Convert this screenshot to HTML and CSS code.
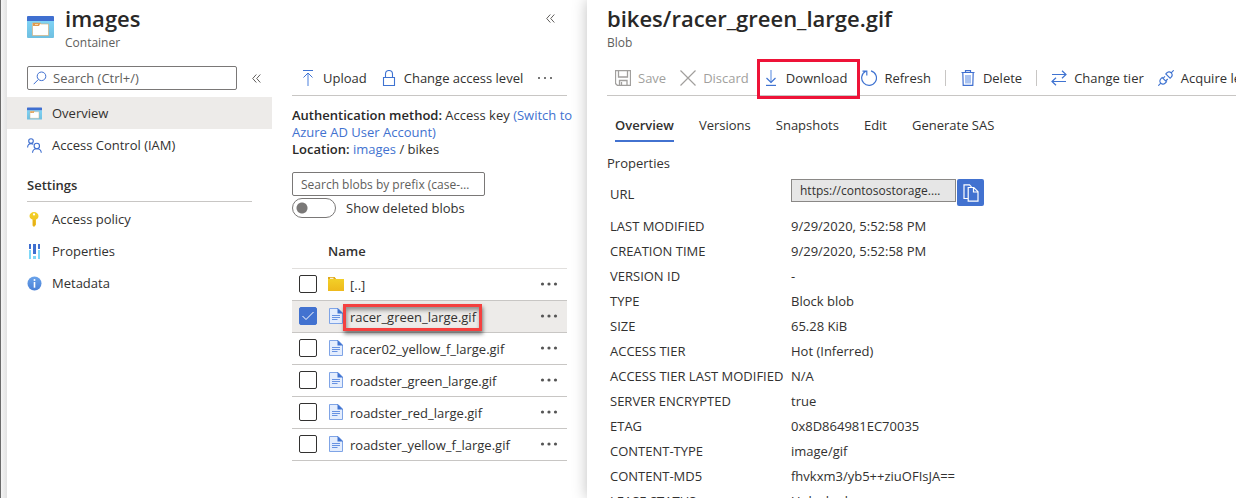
FILE: index.html
```html
<!DOCTYPE html>
<html lang="en">
<head>
<meta charset="utf-8">
<title>images - Container</title>
<link rel="stylesheet" href="styles.css">
</head>
<body>
<svg class="defs" aria-hidden="true">
  <defs>
    <linearGradient id="sky" x1="0" y1="0" x2="0" y2="1"><stop offset="0" stop-color="#7fd3f5"/><stop offset="1" stop-color="#6fbfe0"/></linearGradient>
    <linearGradient id="gold" x1="0" y1="0" x2="0" y2="1"><stop offset="0" stop-color="#f3d32a"/><stop offset="1" stop-color="#eeb91c"/></linearGradient>
    <linearGradient id="info" x1="0" y1="0" x2="0" y2="1"><stop offset="0" stop-color="#6aa3ea"/><stop offset="1" stop-color="#4a80d6"/></linearGradient>
    <symbol id="container" viewBox="0 0 27 22">
      <path d="M0 5h27v16a1 1 0 0 1-1 1H1a1 1 0 0 1-1-1z" fill="url(#sky)"/>
      <path d="M1 0h25a1 1 0 0 1 1 1v4H0V1a1 1 0 0 1 1-1z" fill="#3f6fd0"/>
      <path d="M5.500 7h8v1h8v11.500h-16z" fill="#fff" stroke="#dba96a" stroke-width=".6"/>
      <path d="M6 7h7.500L12 10H6z" fill="#e09a4e"/>
      <path d="M8 8.500h3" stroke="#f7d9a8"/>
    </symbol>
    <symbol id="file" viewBox="0 0 14 16">
      <path d="M.5.5h8.500l4.500 4.500v10.500H.5z" fill="#e4edfd" stroke="#7fa4e6"/>
      <path d="M8.500 0 14 5.500H8.500z" fill="#3f73d1"/>
      <path d="M3 7.500h8M3 9.500h8M3 11.500h5.500" stroke="#6792e2"/>
    </symbol>
    <symbol id="dots" viewBox="0 0 18 4">
      <circle cx="2.500" cy="2" r="1.600"/><circle cx="9" cy="2" r="1.600"/><circle cx="15.500" cy="2" r="1.600"/>
    </symbol>
    <symbol id="collapse" viewBox="0 0 9 9">
      <path d="M4.300.5.700 4.500l3.600 4M8.300.5 4.700 4.500l3.600 4" fill="none" stroke="#605e5c"/>
    </symbol>
  </defs>
</svg>
<div class="portal">
  <section class="blade container-blade">
    <header class="blade-head">
      <svg class="blade-icon"><use href="#container"/></svg>
      <div>
        <h1>images</h1>
        <p class="kind">Container</p>
      </div>
      <button class="plain collapse" aria-label="Collapse blade"><svg class="i9"><use href="#collapse"/></svg></button>
    </header>
    <div class="blade-body">
      <nav class="side">
        <div class="side-search">
          <label class="search-box">
            <svg class="i14" viewBox="0 0 14 14" fill="none" stroke="#3f6fd0"><circle cx="8.500" cy="5.300" r="4.300"/><path d="M5.300 8.500.700 13.200"/></svg>
            <input type="text" placeholder="Search (Ctrl+/)" aria-label="Search menu">
          </label>
          <button class="plain" aria-label="Collapse menu"><svg class="i9"><use href="#collapse"/></svg></button>
        </div>
        <a href="#" class="item active"><svg class="i15"><use href="#container"/></svg>Overview</a>
        <a href="#" class="item"><svg class="i15" viewBox="0 0 15 15" fill="none" stroke="#3f6fd0" stroke-width="1.100"><circle cx="4" cy="3" r="2.300"/><path d="M.6 9.500C.6 7 2 5.600 4 5.600q1.500 0 2.300.8"/><circle cx="9.800" cy="8" r="2.700"/><path d="M5.500 14.700c.2-2.600 1.800-4 4.300-4s4.300 1.400 4.500 4"/></svg>Access Control (IAM)</a>
        <h2>Settings</h2>
        <a href="#" class="item"><svg class="i15" viewBox="0 0 15 15"><path d="M7 0a4.500 4 0 0 1 4.500 4c0 1.800-1 3-2.500 3.600v5.200L7 15l-1.500-1.500V7.600C3.800 7 2.500 5.800 2.500 4A4.500 4 0 0 1 7 0z" fill="url(#gold)"/><circle cx="7" cy="2.400" r="1.100" fill="#fff"/><path d="M7 8v5.500" stroke="#d59a12" stroke-width=".8"/></svg>Access policy</a>
        <a href="#" class="item"><svg class="i15" viewBox="0 0 15 15"><path d="M2 0h2v5H2zM6 0h3v10H6zM11 0h2v5h-2z" fill="#3f6fd0"/><path d="M2 6h2v9H2zM6 12h3v3H6zM11 6h2v9h-2z" fill="#7fd8f8"/></svg>Properties</a>
        <a href="#" class="item"><svg class="i15" viewBox="0 0 15 15"><circle cx="7.500" cy="7.500" r="7" fill="url(#info)"/><circle cx="7.500" cy="3.900" r="1" fill="#fff"/><path d="M7.500 6v5.700" stroke="#fff" stroke-width="1.600"/></svg>Metadata</a>
      </nav>
      <main class="list">
        <div class="toolbar">
          <button class="tool"><svg class="i16" viewBox="0 0 16 16" fill="none" stroke="#3f73d1"><path d="M3 .5h10"/><path d="M8 16V3" stroke="#8fb0ea" stroke-width="1.600"/><path d="M3.500 7.500 8 3l4.500 4.500"/></svg>Upload</button>
          <button class="tool"><svg class="i16" viewBox="0 0 16 16" fill="none" stroke="#3f73d1" stroke-width="1.100"><path d="M2.500 7.500h11v8h-11zM4.500 7.500V4a3.500 3.500 0 0 1 7 0v3.500"/></svg>Change access level</button>
          <button class="plain" aria-label="More commands"><svg class="more" viewBox="0 0 16 4"><path d="M1 1h2v2H1zM7 1h2v2H7zM13 1h2v2h-2z"/></svg></button>
        </div>
        <div class="info">
          <p><b>Authentication method:</b> Access key <a href="#">(Switch to<br>Azure AD User Account)</a></p>
          <p><b>Location:</b> <a href="#">images</a> / bikes</p>
        </div>
        <input class="prefix" type="text" placeholder="Search blobs by prefix (case-sensitive)" aria-label="Search blobs by prefix">
        <label class="switch"><input type="checkbox" role="switch">Show deleted blobs</label>
        <table class="blobs">
          <thead><tr><td></td><th scope="col" colspan="3">Name</th></tr></thead>
          <tbody>
            <tr><td class="check"><input type="checkbox" aria-label="Select parent folder"></td><td class="type"><svg class="i16" viewBox="0 0 16 16"><path d="M0 1h6.500l1.500 2h8v12H0z" fill="url(#gold)"/><path d="M0 1h6.500l1.500 2H0z" fill="#dfa81c"/><path d="M2 2.300h3.500" stroke="#fff"/></svg></td><td class="name"><a href="#">[..]</a></td><td class="menu"><button class="plain" aria-label="More"><svg class="dots"><use href="#dots"/></svg></button></td></tr>
            <tr class="selected"><td class="check"><input type="checkbox" checked aria-label="Select racer_green_large.gif"></td><td class="type"><svg class="file"><use href="#file"/></svg></td><td class="name"><a href="#" class="marked">racer_green_large.gif</a></td><td class="menu"><button class="plain" aria-label="More"><svg class="dots"><use href="#dots"/></svg></button></td></tr>
            <tr><td class="check"><input type="checkbox" aria-label="Select racer02_yellow_f_large.gif"></td><td class="type"><svg class="file"><use href="#file"/></svg></td><td class="name"><a href="#">racer02_yellow_f_large.gif</a></td><td class="menu"><button class="plain" aria-label="More"><svg class="dots"><use href="#dots"/></svg></button></td></tr>
            <tr><td class="check"><input type="checkbox" aria-label="Select roadster_green_large.gif"></td><td class="type"><svg class="file"><use href="#file"/></svg></td><td class="name"><a href="#">roadster_green_large.gif</a></td><td class="menu"><button class="plain" aria-label="More"><svg class="dots"><use href="#dots"/></svg></button></td></tr>
            <tr><td class="check"><input type="checkbox" aria-label="Select roadster_red_large.gif"></td><td class="type"><svg class="file"><use href="#file"/></svg></td><td class="name"><a href="#">roadster_red_large.gif</a></td><td class="menu"><button class="plain" aria-label="More"><svg class="dots"><use href="#dots"/></svg></button></td></tr>
            <tr><td class="check"><input type="checkbox" aria-label="Select roadster_yellow_f_large.gif"></td><td class="type"><svg class="file"><use href="#file"/></svg></td><td class="name"><a href="#">roadster_yellow_f_large.gif</a></td><td class="menu"><button class="plain" aria-label="More"><svg class="dots"><use href="#dots"/></svg></button></td></tr>
          </tbody>
        </table>
      </main>
    </div>
  </section>
  <section class="blade blob-blade">
    <header class="blade-head">
      <div>
        <h1>bikes/racer_green_large.gif</h1>
        <p class="kind">Blob</p>
      </div>
    </header>
    <div class="toolbar">
      <button class="tool" disabled><svg class="i16" viewBox="0 0 16 16" fill="none" stroke="#a19f9d"><path d="M.5.5h15v15h-13l-2-2zM3.500.5v6.500h9V.5M4.500 15.500v-5h7.500v5M6.500 12v3.500" stroke-width="1.300"/></svg>Save</button>
      <button class="tool" disabled><svg class="i16" viewBox="0 0 16 16" fill="none" stroke="#a19f9d" stroke-width="1.200"><path d="m.5.5 15 15M15.500.5l-15 15"/></svg>Discard</button>
      <button class="tool framed"><svg class="i16" viewBox="0 0 16 16" fill="none" stroke="#3f73d1" stroke-width="1.200"><path d="M3 15.400h10"/><path d="M8 0v12.500" stroke="#6f9ae4"/><path d="M3.500 8 8 12.500 12.500 8"/></svg>Download</button>
      <button class="tool"><svg class="i16" viewBox="0 0 16 16" fill="none" stroke="#3f73d1" stroke-width="1.200"><path d="M10 .8a7.400 7.400 0 1 1-5.200.5M1.500 1.200h4.300v4.300"/></svg>Refresh</button>
      <span class="rule"></span>
      <button class="tool"><svg class="i16" viewBox="0 0 16 16" fill="none" stroke="#3f6fd0" stroke-width="1.200"><path d="M1.500 2.500h13M5.500 2V.6h5V2M2.800 2.500l.4 12.900h9.600l.4-12.900"/><path d="M5 5h6v8.500H5z" fill="#a9c2f0" stroke="none"/></svg>Delete</button>
      <span class="rule"></span>
      <button class="tool"><svg class="i16" viewBox="0 0 16 16" fill="none" stroke="#3f73d1" stroke-width="1.200"><path d="M1 4.500h14M11 .7l4 3.800-4 3.800M15 11.500H1M5 7.700l-4 3.800 4 3.800"/></svg>Change tier</button>
      <button class="tool"><svg class="i16" viewBox="0 0 16 16" fill="none" stroke="#3f73d1" stroke-width="1.100"><path d="m.3 15.700 2.500-2.500M2.800 13.200c-1.500-1.500-1-3.300.2-4.500l1.200-1.200 4.300 4.300L7.300 13c-1.200 1.200-3 1.700-4.500.2zM5 8.300l2-2M7.700 11l2-2M15.700.3l-2.500 2.500M13.200 2.800c-1.500-1.500-3.300-1-4.500.2L7.800 3.900l4.300 4.300.9-.9c1.200-1.200 1.700-3 .2-4.500z"/></svg>Acquire lease</button>
    </div>
    <div class="tabs" role="tablist">
      <button role="tab" aria-selected="true">Overview</button>
      <button role="tab">Versions</button>
      <button role="tab">Snapshots</button>
      <button role="tab">Edit</button>
      <button role="tab">Generate SAS</button>
    </div>
    <h3>Properties</h3>
    <table class="props">
      <tr class="url"><th scope="row"><label for="url">URL</label></th><td><div class="copy"><input id="url" type="text" readonly value="https://contosostorage.blob.core.windows.net/images/bikes/racer_green_large.gif"><button aria-label="Copy to clipboard"><svg class="copy-icon" viewBox="0 0 16 18" fill="none" stroke="#fff" stroke-width="1.200"><path d="M5 14.500H1V.8h5.500l2 2M10.800 3.500H5.200v13.700H15V7.700zM10.500 3.800V8H15"/></svg></button></div></td></tr>
      <tr><th scope="row">LAST MODIFIED</th><td>9/29/2020, 5:52:58 PM</td></tr>
      <tr><th scope="row">CREATION TIME</th><td>9/29/2020, 5:52:58 PM</td></tr>
      <tr><th scope="row">VERSION ID</th><td>-</td></tr>
      <tr><th scope="row">TYPE</th><td>Block blob</td></tr>
      <tr><th scope="row">SIZE</th><td>65.28 KiB</td></tr>
      <tr><th scope="row">ACCESS TIER</th><td>Hot (Inferred)</td></tr>
      <tr><th scope="row">ACCESS TIER LAST MODIFIED</th><td>N/A</td></tr>
      <tr><th scope="row">SERVER ENCRYPTED</th><td>true</td></tr>
      <tr><th scope="row">ETAG</th><td>0x8D864981EC70035</td></tr>
      <tr><th scope="row">CONTENT-TYPE</th><td>image/gif</td></tr>
      <tr><th scope="row">CONTENT-MD5</th><td>fhvkxm3/yb5++ziuOFIsJA==</td></tr>
      <tr><th scope="row">LEASE STATUS</th><td>Unlocked</td></tr>
    </table>
  </section>
</div>
</body>
</html>
```

FILE: styles.css
```css
* { box-sizing: border-box; }
body {
  margin: 0;
  height: 100vh;
  overflow: hidden;
  background: #fff;
  color: #323130;
  font: 13px/18px "Segoe UI", "Open Sans", sans-serif;
}
h1, h2, h3, p { margin: 0; }
a { color: #4272d0; text-decoration: none; }
input, button { font: inherit; color: inherit; }
button { border: 0; background: none; padding: 0; }
svg { display: block; flex: none; }
.defs { position: absolute; width: 0; height: 0; }
.i9 { width: 9px; height: 9px; }
.i14 { width: 14px; height: 14px; }
.i15 { width: 15px; height: 15px; }
.i16 { width: 16px; height: 16px; }
.plain { display: flex; }

.portal {
  display: flex;
  height: 100vh;
  padding-left: 6px;
  border-left: 1px solid #6b6b6b;
  background: linear-gradient(90deg, #f4f4f4, #e2e2e2) 0 0 / 6px 100% no-repeat;
}
.blade { background: #fff; overflow: hidden; }
.container-blade { flex: none; width: 580px; }
.blob-blade {
  position: relative;
  flex: 1;
  min-width: 0;
  padding-left: 20px;
  box-shadow: 0 0 14px rgba(0, 0, 0, .25);
}
.blade-head { display: flex; height: 60px; padding-top: 3px; }
.container-blade .blade-head { padding-left: 20px; }
.blade-icon { width: 27px; height: 22px; margin: 13px 11px 0 0; }
.collapse { margin: 11px 32px 0 auto; align-self: flex-start; }
h1 { font-size: 22px; line-height: 30px; font-weight: 600; color: #292827; }
.kind { font-size: 12px; line-height: 16px; margin-top: 2px; color: #605e5c; }

.blade-body { display: flex; }
.side { flex: none; width: 265px; padding-top: 6px; }
.side-search { display: flex; align-items: center; gap: 15px; margin: 0 0 7px 20px; }
.search-box {
  display: flex;
  align-items: center;
  gap: 6px;
  width: 210px;
  height: 24px;
  padding: 0 5px;
  border: 1px solid #7a7877;
  border-radius: 2px;
}
.search-box input { flex: 1; min-width: 0; border: 0; padding: 0; outline: 0; background: none; }
input::placeholder { color: #605e5c; opacity: 1; }
.item {
  display: flex;
  align-items: center;
  gap: 10px;
  height: 32px;
  padding-left: 20px;
  color: #323130;
}
.item.active { background: #edebe9; }
h2 {
  margin: 15px 20px 1px 20px;
  height: 26px;
  border-bottom: 1px solid #c8c6c4;
  font-size: 13px;
  line-height: 18px;
  font-weight: 600;
}

.list { flex: 1; min-width: 0; padding: 0 20px; }
.toolbar { display: flex; align-items: center; gap: 14px; height: 36px; padding: 0 0 0 8px; border-bottom: 1px solid #c8c6c4; }
.tool { display: flex; flex: none; align-items: center; gap: 7px; position: relative; }
.tool:disabled { color: #a19f9d; }
.rule { flex: none; width: 1px; height: 16px; background: #c8c6c4; }
.dots { width: 18px; height: 4px; fill: #555; }
.more { width: 16px; height: 4px; fill: #777; }
.framed::after { content: ""; position: absolute; inset: -10px -13px -12px -6px; border: 3px solid #ee1338; }
.info { padding: 11px 0 14px; line-height: 17px; white-space: nowrap; }
.info b { font-weight: 600; color: #292827; }
.prefix {
  display: block;
  width: 193px;
  height: 24px;
  padding: 0 14px 0 8px;
  border: 1px solid #7a7877;
  border-radius: 2px;
  font-size: 12px;
  text-overflow: ellipsis;
}
.switch { display: flex; align-items: center; gap: 10px; margin-top: 2px; }
.switch input {
  appearance: none;
  width: 44px;
  height: 20px;
  margin: 0;
  border: 1px solid #7a7877;
  border-radius: 10px;
  background: radial-gradient(circle at 9px 9px, #7a7877 5px, transparent 6px);
}
table { border-collapse: collapse; }
.blobs { width: 100%; margin-top: 15px; }
.blobs tr { height: 32px; border-bottom: 1px solid #c8c6c4; }
.blobs thead tr { height: 35px; border-color: #e1dfdd; }
.blobs td, .blobs th { padding: 0; text-align: left; font-weight: 600; }
.blobs th { padding-top: 2px; }
.blobs td { font-weight: 400; }
.blobs tbody .name { padding-top: 2px; }
.check { width: 36px; }
.type { width: 22px; }
.blobs a { color: #323130; position: relative; }
.check input {
  appearance: none;
  display: block;
  width: 18px;
  height: 18px;
  margin: 0 0 0 7px;
  border: 1px solid #323130;
  border-radius: 2px;
}
.check input:checked {
  border-color: #4272d0;
  background: #4272d0 url("data:image/svg+xml,%3Csvg xmlns='http://www.w3.org/2000/svg' viewBox='0 0 16 16'%3E%3Cpath d='M2.500 8l3.500 3.500 7.500-7.500' fill='none' stroke='white'/%3E%3C/svg%3E");
}
.file { width: 14px; height: 16px; margin-left: 1px; }
.menu { width: 27px; }
.selected { background: #edebe9; }
.marked::after {
  content: "";
  position: absolute;
  inset: -4px -6px -5px -7px;
  border: 3px solid #f4403f;
  box-shadow: 1px 3px 4px rgba(0, 0, 0, .5), inset 1px 3px 4px rgba(0, 0, 0, .4);
}

.tabs { display: flex; gap: 25px; padding: 18px 0 0 8px; }
.tabs button { height: 28px; padding-bottom: 4px; border-bottom: 2px solid transparent; }
.tabs [aria-selected] { border-color: #4272d0; font-weight: 600; }
h3 { margin-top: 12px; font-size: 13px; font-weight: 400; }
.props { margin: 7px 0 0 3px; }
.props th, .props td { height: 25px; padding: 0; text-align: left; font-weight: 400; white-space: nowrap; }
.props th { width: 181px; }
.props .url th { height: 34px; padding-bottom: 4px; }
.props .url td { vertical-align: top; }
.copy { display: flex; gap: 1px; height: 27px; }
.copy input { width: 165px; height: 23px; padding: 0 8px; border: 1px solid #8a8886; background: #e6e6e6; font-size: 12px; text-overflow: ellipsis; }
.copy button { display: grid; place-items: center; width: 27px; border-radius: 2px; background: #4272d0; }
.copy-icon { width: 16px; height: 18px; }
```
